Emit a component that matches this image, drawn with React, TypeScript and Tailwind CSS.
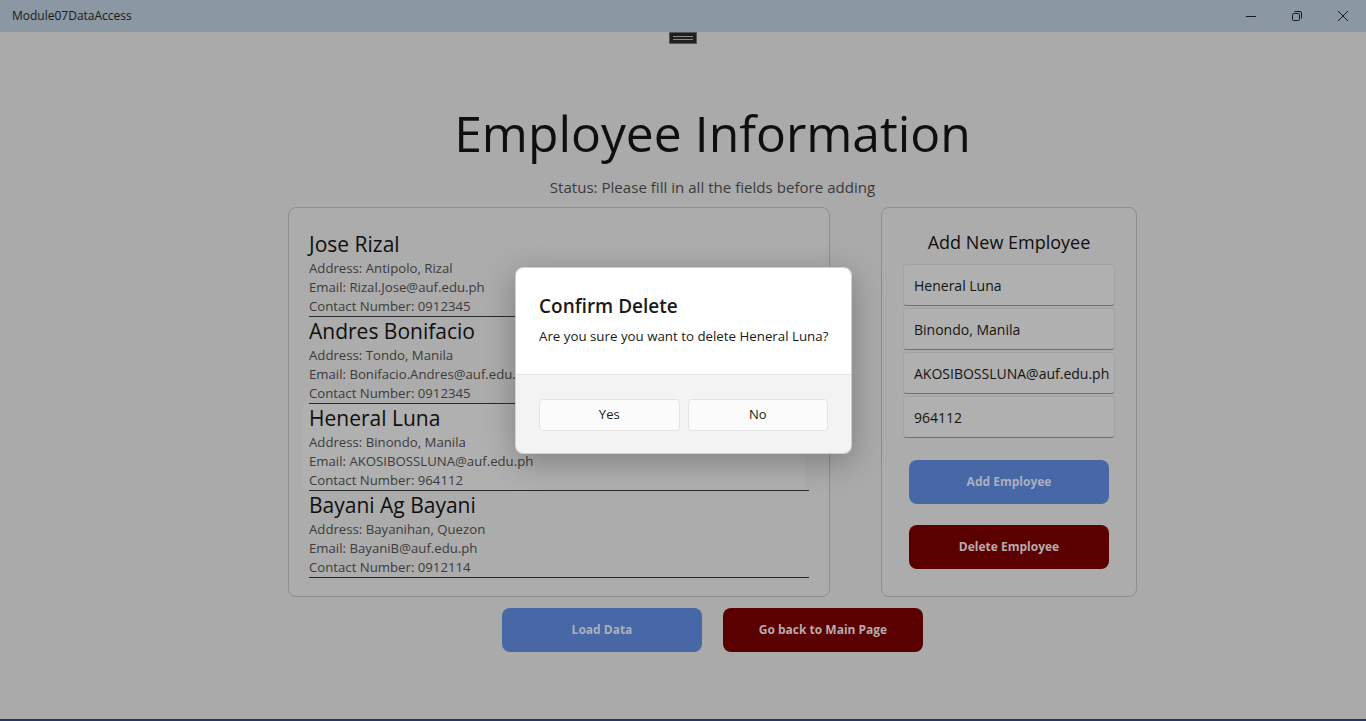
import { useState } from 'react';

type Employee = {
  name: string;
  address: string;
  email: string;
  contact: string;
};

const employees: Employee[] = [
  { name: 'Jose Rizal', address: 'Antipolo, Rizal', email: 'Rizal.Jose@auf.edu.ph', contact: '0912345' },
  { name: 'Andres Bonifacio', address: 'Tondo, Manila', email: 'Bonifacio.Andres@auf.edu.ph', contact: '0912345' },
  { name: 'Heneral Luna', address: 'Binondo, Manila', email: 'AKOSIBOSSLUNA@auf.edu.ph', contact: '964112' },
  { name: 'Bayani Ag Bayani', address: 'Bayanihan, Quezon', email: 'BayaniB@auf.edu.ph', contact: '0912114' },
];

function TitleBar() {
  return (
    <div className="h-8 bg-[#8b97a2] flex items-center justify-between shrink-0">
      <span className="pl-3 text-[12px] text-[#1a1a1a]">Module07DataAccess</span>
      <div className="flex h-full">
        <button className="w-[46px] h-full flex items-center justify-center">
          <svg width="10" height="10" viewBox="0 0 10 10">
            <path d="M0 5.5h10" stroke="#1a1a1a" strokeWidth="1" />
          </svg>
        </button>
        <button className="w-[46px] h-full flex items-center justify-center">
          <svg width="10" height="10" viewBox="0 0 10 10" fill="none" stroke="#1a1a1a" strokeWidth="1">
            <rect x="0.5" y="2.5" width="7" height="7" rx="1.2" />
            <path d="M2.5 0.5h5.5a1.5 1.5 0 0 1 1.5 1.5v5.5" />
          </svg>
        </button>
        <button className="w-[46px] h-full flex items-center justify-center">
          <svg width="10" height="10" viewBox="0 0 10 10">
            <path d="M0 0L10 10M10 0L0 10" stroke="#1a1a1a" strokeWidth="1" />
          </svg>
        </button>
      </div>
    </div>
  );
}

function EmployeeItem({ emp, selected }: { emp: Employee; selected: boolean }) {
  return (
    <div className={selected ? 'bg-[#b0b0b0] -ml-[6px] pl-[6px] mr-[4px]' : ''}>
      <div className={'border-b border-[#2a2a2a] ' + (selected ? 'mr-[-4px]' : '')}>
        <div className="text-[21px] leading-[29px] text-[#0f0f0f]">{emp.name}</div>
        <div className="text-[13.2px] leading-[19px] text-[#3b3b3b]">Address: {emp.address}</div>
        <div className="text-[13.2px] leading-[19px] text-[#3b3b3b]">Email: {emp.email}</div>
        <div className="text-[13.2px] leading-[19px] text-[#3b3b3b]">Contact Number: {emp.contact}</div>
      </div>
    </div>
  );
}

function Field({ value }: { value: string }) {
  return (
    <div className="h-[42px] rounded-[4px] bg-[#b0b0b0] border border-[#a3a3a3] border-b-[#6f6f6f] flex items-center px-[10px] text-[14px] text-[#141414]">
      {value}
    </div>
  );
}

export default function App() {
  const [selected] = useState(2);

  return (
    <div className="w-[1366px] h-[721px] flex flex-col bg-[#aaaaaa] border-b-2 border-[#26365c] overflow-hidden relative" style={{ fontFamily: '"Open Sans", "Noto Sans", sans-serif' }}>
      <TitleBar />

      <div className="flex-1 relative">
        <div className="absolute left-[669px] top-0 w-[28px] h-[12px] bg-[#1f1f1f] border border-[#555] flex flex-col items-center justify-center gap-[2px]">
          <div className="w-[20px] h-px bg-[#8a8a8a]" />
          <div className="w-[20px] h-px bg-[#8a8a8a]" />
        </div>

        <div className="flex flex-col items-center pl-[59px]">
          <h1 className="mt-[65px] text-[49.8px] leading-[72px] text-[#0f0f0f]">Employee Information</h1>
          <p className="mt-[8px] text-[15.1px] leading-[20px] text-[#3a3a3a]">Status: Please fill in all the fields before adding</p>

          <div className="mt-[10px] flex gap-[51px]">
            <div className="w-[542px] h-[390px] rounded-[8px] border border-[#8e8e8e] bg-[#acacac] pl-[20px] pr-[20px] pt-[22px]">
              {employees.map((emp, i) => (
                <EmployeeItem key={emp.name} emp={emp} selected={i === selected} />
              ))}
            </div>

            <div className="w-[256px] h-[390px] rounded-[8px] border border-[#8e8e8e] bg-[#acacac] px-[21px] pt-[21px]">
              <div className="text-center text-[18px] leading-[26px] text-[#0f0f0f]">Add New Employee</div>
              <div className="mt-[9px] flex flex-col gap-[2px]">
                <Field value="Heneral Luna" />
                <Field value="Binondo, Manila" />
                <Field value="AKOSIBOSSLUNA@auf.edu.ph" />
                <Field value="964112" />
              </div>
              <div className="mt-[22px] px-[6px] flex flex-col gap-[21px]">
                <button className="h-[44px] rounded-[8px] bg-[#4767a6] text-[12px] font-bold text-[#aab0bd]">Add Employee</button>
                <button className="h-[44px] rounded-[8px] bg-[#5a0000] text-[12px] font-bold text-[#b7abab]">Delete Employee</button>
              </div>
            </div>
          </div>

          <div className="mt-[11px] flex gap-[21px]">
            <button className="w-[200px] h-[44px] rounded-[8px] bg-[#4767a6] text-[12px] font-bold text-[#aab0bd]">Load Data</button>
            <button className="w-[200px] h-[44px] rounded-[8px] bg-[#5a0000] text-[12px] font-bold text-[#b7abab]">Go back to Main Page</button>
          </div>
        </div>

        <div className="absolute left-[515px] top-[235px] w-[337px] h-[187px] rounded-[8px] overflow-hidden shadow-[0_8px_32px_rgba(0,0,0,0.28)] border border-[#d0d0d0] flex flex-col">
          <div className="bg-white pl-[23px] pt-[24px] h-[106px]">
            <div className="text-[19px] leading-[28px] font-semibold text-[#1a1a1a]">Confirm Delete</div>
            <div className="mt-[6px] text-[13.3px] leading-[20px] whitespace-nowrap text-[#1a1a1a]">Are you sure you want to delete Heneral Luna?</div>
          </div>
          <div className="flex-1 bg-[#f3f3f3] border-t border-[#e5e5e5] px-[23px] pt-[24px] flex gap-[8px]">
            <button className="flex-1 h-[32px] rounded-[4px] bg-[#fbfbfb] border border-[#e3e3e3] text-[13px] text-[#1a1a1a]">Yes</button>
            <button className="flex-1 h-[32px] rounded-[4px] bg-[#fbfbfb] border border-[#e3e3e3] text-[13px] text-[#1a1a1a]">No</button>
          </div>
        </div>
      </div>
    </div>
  );
}
